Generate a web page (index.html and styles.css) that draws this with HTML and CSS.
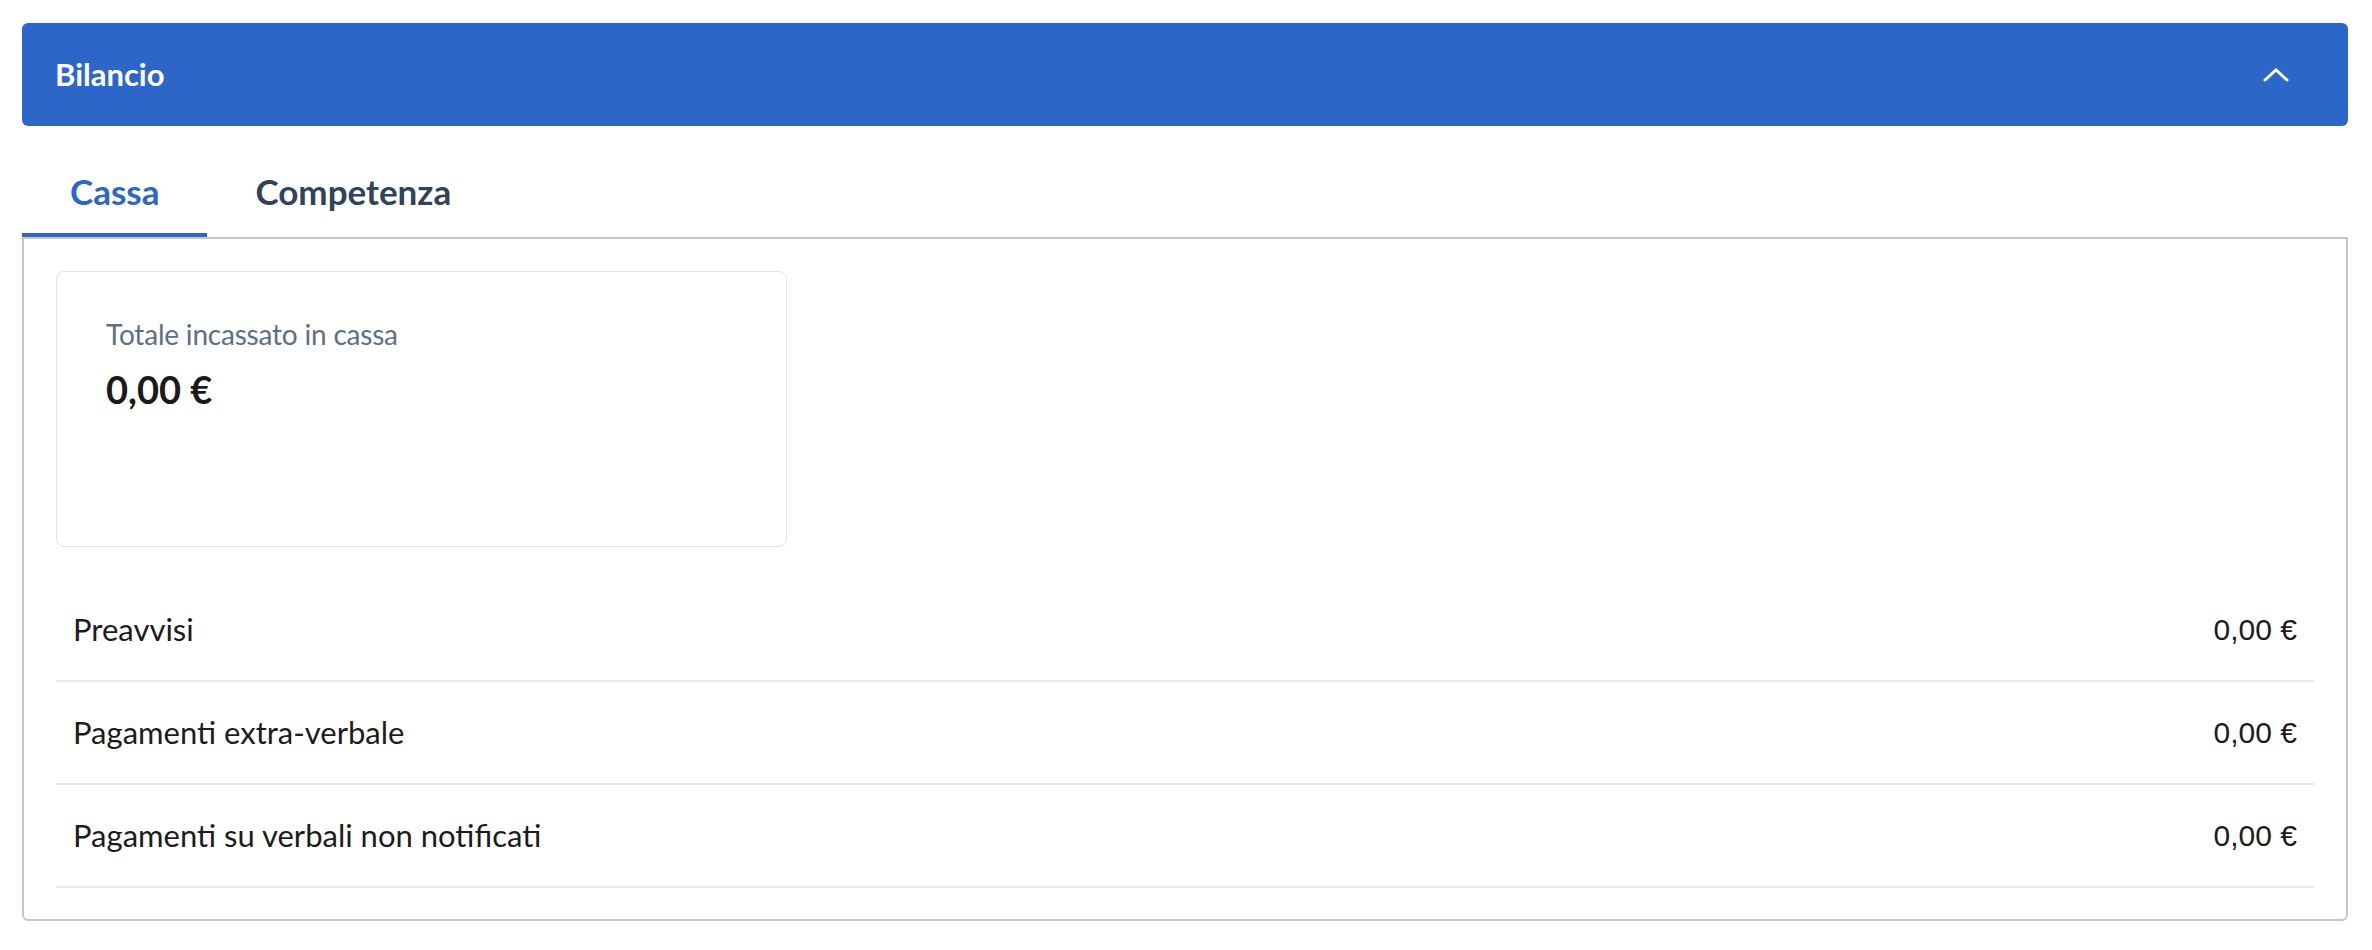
FILE: index.html
```html
<!DOCTYPE html>
<html lang="it">
<head>
<meta charset="utf-8">
<title>Bilancio</title>
<link rel="stylesheet" href="styles.css">
</head>
<body>
<div class="page">
  <div class="acc-head">
    <span class="acc-title">Bilancio</span>
    <svg class="chev" width="26" height="16" viewBox="0 0 26 16" aria-hidden="true">
      <polyline points="2,13 13,3 24,13" fill="none" stroke="#ffffff" stroke-width="3" stroke-linecap="round" stroke-linejoin="miter"/>
    </svg>
  </div>

  <div class="tabs">
    <div class="tab active">Cassa</div>
    <div class="tab">Competenza</div>
  </div>

  <div class="panel">
    <div class="card">
      <div class="card-label">Totale incassato in cassa</div>
      <div class="card-value">0,00 €</div>
    </div>

    <div class="rows">
      <div class="row">
        <span class="row-label">Preavvisi</span>
        <span class="row-value">0,00 €</span>
      </div>
      <div class="row">
        <span class="row-label">Pagamenti extra-verbale</span>
        <span class="row-value">0,00 €</span>
      </div>
      <div class="row">
        <span class="row-label">Pagamenti su verbali non notificati</span>
        <span class="row-value">0,00 €</span>
      </div>
    </div>
  </div>
</div>
</body>
</html>
```

FILE: styles.css
```css
* { box-sizing: border-box; }

html, body {
  margin: 0;
  padding: 0;
  background: #ffffff;
}

body {
  font-family: Lato, "Noto Sans", "Liberation Sans", sans-serif;
  color: #1c1c1c;
}

.page {
  padding: 23px 24px 0 22px;
}

.acc-head {
  height: 103px;
  background: #2c67c7;
  border-radius: 6px;
  display: flex;
  align-items: center;
  justify-content: space-between;
  padding: 0 59px 0 33px;
}

.acc-title {
  color: #ffffff;
  font-weight: 700;
  font-size: 31px;
  line-height: 1.2;
}

.chev {
  display: block;
  margin-top: 1px;
}

.tabs {
  display: flex;
  margin-top: 44px;
}

.tab {
  font-size: 35px;
  font-weight: 700;
  line-height: 43px;
  padding: 0 48px 20px;
  color: #30435a;
  border-bottom: 4px solid transparent;
}

.tab.active {
  color: #2c67c7;
  border-bottom-color: #2c67c7;
}

.panel {
  border: 2px solid #c6c6c6;
  border-radius: 0 0 6px 6px;
  padding: 32px 32px 31px;
}

.card {
  width: 731px;
  height: 276px;
  border: 1px solid #e3e3ee;
  border-radius: 8px;
  padding: 46px 49px 0;
}

.card-label {
  font-size: 28px;
  letter-spacing: -0.2px;
  line-height: 1.2;
  color: #5e6f83;
}

.card-value {
  margin-top: 15px;
  font-size: 38px;
  font-weight: 700;
  line-height: 1.2;
  color: #1a1a1a;
}

.rows {
  margin-top: 32px;
}

.row {
  height: 103px;
  border-bottom: 2px solid #e9e9e9;
  display: flex;
  align-items: center;
  justify-content: space-between;
  padding: 0 17px;
}

.row-label {
  font-size: 31px;
  line-height: 1.2;
  color: #1c1c1c;
}

.row-value {
  font-family: "Liberation Sans", Arial, sans-serif;
  font-size: 30px;
  line-height: 1.2;
  color: #1c1c1c;
}
```
